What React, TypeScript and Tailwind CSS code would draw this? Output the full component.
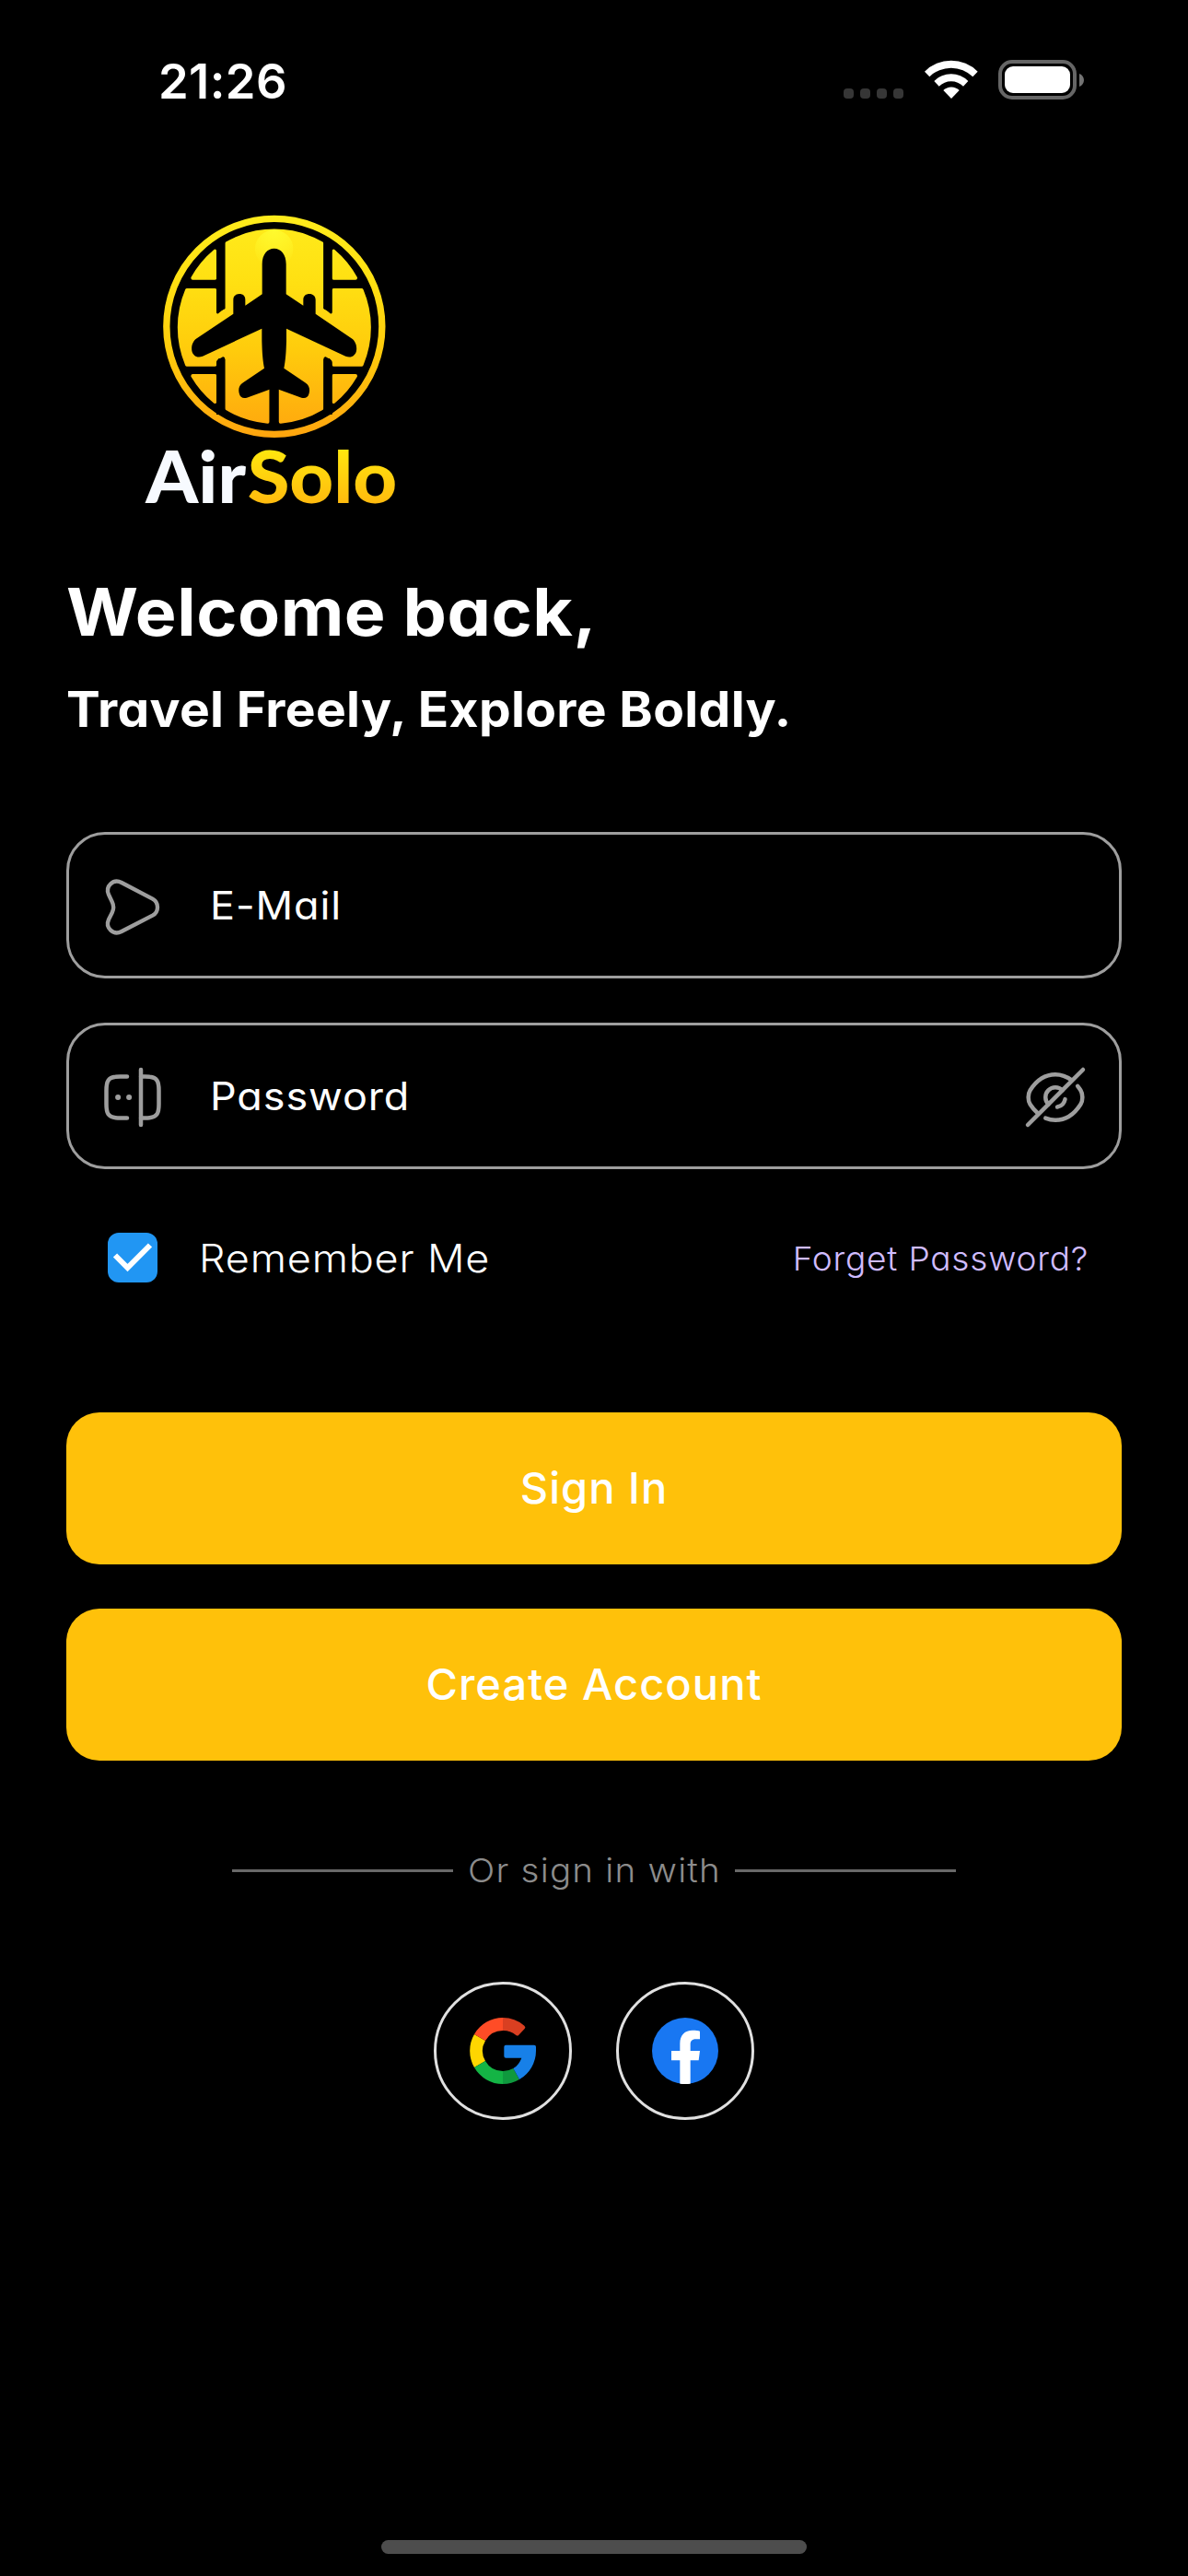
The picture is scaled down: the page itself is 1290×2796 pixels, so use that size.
import React from 'react';

function StatusBar() {
  return (
    <header className="flex h-[177px] items-start justify-between pl-[172px] pr-[113px]">
      <span className="mt-[58px] h-[60px] text-[52.5px] leading-[60px] font-semibold tracking-[0.4px]">21:26</span>
      <div className="mt-[65px] flex h-[43px] items-center">
        <div className="mt-[30px] flex gap-[7px]">
          {[0, 1, 2, 3].map((i) => (
            <i key={i} className="size-[11px] rounded-[4px] bg-[#363636]" />
          ))}
        </div>
        <svg className="ml-[22px] h-[43px] w-[60px]" viewBox="368 75 180 129" fill="#fff">
          <path d="M371 113A122 122 0 0 1 544 113L528 130A100 100 0 0 0 387 130Z" />
          <path d="M402 144A78 78 0 0 1 513 144L497 161A56 56 0 0 0 418 161Z" />
          <path d="M432 174A37 37 0 0 1 484 174L458 201Z" />
        </svg>
        <div className="ml-[21px] h-[43px] w-[85px] rounded-[15px] border-[4px] border-[#666] p-[3px]">
          <div className="h-full rounded-[9px] bg-white" />
        </div>
        <svg className="ml-[3px] h-[14px] w-[5px]" viewBox="0 0 5 14" fill="#737373">
          <path d="M0 0C3 1 5 4 5 7S3 13 0 14Z" />
        </svg>
      </div>
    </header>
  );
}

function Logo() {
  return (
    <svg className="-mb-[40px] ml-[58px] h-[380px] w-[330px]" viewBox="-30 0 990 1140">
      <defs>
        <linearGradient id="gold" gradientUnits="userSpaceOnUse" x1="0" y1="40" x2="0" y2="765">
          <stop offset="0" stopColor="#ffec1c" />
          <stop offset="0.3" stopColor="#ffe012" />
          <stop offset="0.6" stopColor="#ffcc0c" />
          <stop offset="1" stopColor="#ffa50e" />
        </linearGradient>
        <radialGradient id="glow" gradientUnits="userSpaceOnUse" cx="473" cy="95" r="120">
          <stop offset="0" stopColor="#fffa2e" />
          <stop offset="1" stopColor="#fffa2e" stopOpacity="0" />
        </radialGradient>
        <linearGradient id="word" gradientUnits="userSpaceOnUse" x1="0" y1="800" x2="0" y2="985">
          <stop offset="0" stopColor="#ffe80e" />
          <stop offset="1" stopColor="#ffb90e" />
        </linearGradient>
      </defs>
      <circle cx="473.5" cy="403" r="351" fill="none" stroke="url(#gold)" strokeWidth="22" />
      <g fill="url(#gold)" stroke="url(#gold)" strokeWidth="12" strokeLinejoin="round">
        <path d="M319 134A310 310 0 0 1 628 134V345L662 372H781V402H163V372H285L319 345Z" stroke="none" />
        <path d="M319 133A310 310 0 0 1 628 133V670A310 310 0 0 1 494 713V600H452V713A310 310 0 0 1 319 670Z" />
        <path d="M280 158V245H208A310 310 0 0 1 280 158Z" />
        <path d="M667 158V245H738A310 310 0 0 0 667 158Z" />
        <path d="M189 285H280V370L325 345V505L290 500L280 516V527H189A310 310 0 0 1 189 285Z" />
        <path d="M758 285H667V370L622 345V505L656 500L667 516V527H758A310 310 0 0 0 758 285Z" />
        <path d="M280 648V564H208A310 310 0 0 0 280 648Z" />
        <path d="M667 648V564H738A310 310 0 0 1 667 648Z" />
      </g>
      <circle cx="473" cy="150" r="62" fill="url(#glow)" />
      <g fill="#000">
        <path d="M285 120H313V345Q300 351 291 361Q285 364 285 355Z" />
        <path d="M662 120H634V345Q647 351 656 361Q662 364 662 355Z" />
        <path d="M285 690V522Q285 512 293 509L306 502Q313 501 313 510V690Z" />
        <path d="M662 690V522Q662 512 654 509L641 502Q634 501 634 510V690Z" />
        <path d="M458 600H487V735H458Z" />
        <path d="M434 298V200C434 168 451 149 473 149S512 168 512 200V298L568 335V316C568 303 577 297 588 297S608 304 608 316V362L725 442C740 452 743 470 741 482C738 497 725 507 706 500L513 410V450C512 490 510 515 505 539L574 586C588 595 590 608 587 620C584 634 574 639 562 635L488 608H458L384 635C372 639 362 634 359 620C356 608 358 595 372 586L441 539C436 515 434 490 433 450V410L240 500C221 507 208 497 205 482C203 470 206 452 221 442L340 362V316C340 304 349 297 360 297S379 303 379 316V335Z" />
      </g>
      <text x="55" y="977" fontFamily="Lato, sans-serif" fontWeight="900" fontSize="232" fill="#f7faff" textLength="326" lengthAdjust="spacingAndGlyphs">Air</text>
      <text x="386" y="977" fontFamily="Lato, sans-serif" fontWeight="900" fontSize="232" fill="url(#word)" textLength="488" lengthAdjust="spacingAndGlyphs">Solo</text>
    </svg>
  );
}

const iconProps = {
  fill: 'none',
  stroke: '#9e9e9e',
  strokeLinecap: 'round' as const,
  strokeLinejoin: 'round' as const,
};

function SendIcon() {
  return (
    <svg className="mt-[3px] size-[72px]" viewBox="144 174 216 216" {...iconProps} strokeWidth="13">
      <path d="M216 204L317 257Q333 266 333 284T317 311L216 363C189 377 162 351 174 324L185 302Q194 284 185 266L174 243C162 216 189 190 216 204Z" />
    </svg>
  );
}

function PasswordIcon() {
  return (
    <svg className="mt-[3px] size-[72px]" viewBox="0 0 24 24" {...iconProps} strokeWidth="1.5">
      <path d="M10 19.5H7.5c-.62 0-1.17-.02-1.66-.09C3.21 19.12 2.5 17.88 2.5 14.5v-5c0-3.38.71-4.62 3.34-4.91.49-.07 1.04-.09 1.66-.09H10" />
      <path d="M15.02 4.5h1.48c.62 0 1.17.02 1.66.09 2.63.29 3.34 1.53 3.34 4.91v5c0 3.38-.71 4.62-3.34 4.91-.49.07-1.04.09-1.66.09h-1.48" />
      <path d="M15 2v20" />
      <path d="M10.7 12h.01M6.7 12h.01" strokeWidth="2" />
    </svg>
  );
}

function EyeSlashIcon() {
  return (
    <svg className="mt-[3px] ml-auto size-[72px]" viewBox="0 0 24 24" {...iconProps} strokeWidth="1.5">
      <path d="M14.53 9.47l-5.06 5.06a3.576 3.576 0 1 1 5.06-5.06z" />
      <path d="M17.82 5.77C16.07 4.45 14.07 3.73 12 3.73c-3.53 0-6.82 2.08-9.11 5.68-.9 1.41-.9 3.78 0 5.19.79 1.24 1.71 2.31 2.71 3.17" />
      <path d="M8.42 19.53c1.14.48 2.35.74 3.58.74 3.53 0 6.82-2.08 9.11-5.68.9-1.41.9-3.78 0-5.19-.33-.52-.69-1.01-1.06-1.47" />
      <path d="M15.51 12.7a3.565 3.565 0 0 1-2.82 2.82M9.47 14.53L2 22M22 2l-7.47 7.47" />
    </svg>
  );
}

function Field({ icon, label, trailing }: { icon: React.ReactNode; label: string; trailing?: React.ReactNode }) {
  return (
    <label className="flex h-[159px] items-center rounded-[42px] border-[3px] border-[#9e9e9e] px-[33px]">
      {icon}
      <span className="ml-[48px] origin-left scale-x-[1.07] text-[42px] tracking-[0.85px] [font-feature-settings:'cv11']">{label}</span>
      {trailing}
    </label>
  );
}

function PrimaryButton({ children }: { children: React.ReactNode }) {
  return (
    <button className="h-[165px] w-full rounded-[36px] bg-[#ffc10a] text-[47px] font-medium tracking-[1.05px] text-white">
      {children}
    </button>
  );
}

function GoogleIcon() {
  return (
    <svg className="size-[72px]" viewBox="180 180 216 216">
      <path fill="#ffd600" d="M195 234A108 108 0 0 0 195 342L231 321A66 66 0 0 1 231 255Z" />
      <path fill="#ff4c26" d="M195 234A108 108 0 0 1 288 180V222A66 66 0 0 0 231 255Z" />
      <path fill="#d93f21" d="M288 180A108 108 0 0 1 358 206Q364 211 359 216L340 236Q336 241 331 237A66 66 0 0 0 288 222Z" />
      <path fill="#14b445" d="M195 342A108 108 0 0 0 288 396V354A66 66 0 0 1 231 321Z" />
      <path fill="#0f993e" d="M288 396A108 108 0 0 0 342 381L322 345A66 66 0 0 1 288 354Z" />
      <path fill="#1780e8" d="M342 381A108 108 0 0 0 396 288V275Q396 269 390 269H298Q292 269 292 275V305Q292 311 298 311H349Q341 334 322 345Z" />
    </svg>
  );
}

function FacebookIcon() {
  return (
    <svg className="size-[72px]" viewBox="774 180 216 216">
      <circle cx="882" cy="288" r="108" fill="#1877f2" />
      <path fill="#fff" d="M865 395V319H837V288H865V264C865 236 881 221 906 221C916 221 925 222 930 224V250H917C903 250 899 258 899 267V288H930L926 319H899V395Q882 397 865 395Z" />
    </svg>
  );
}

function SocialButton({ children }: { children: React.ReactNode }) {
  return (
    <button className="flex size-[150px] items-center justify-center rounded-full border-[3px] border-[#e0e0e0]">
      {children}
    </button>
  );
}

export default function App() {
  return (
    <div className="flex h-[2796px] w-[1290px] flex-col overflow-hidden bg-black font-['Inter',sans-serif] whitespace-nowrap text-white">
      <StatusBar />
      <main className="flex flex-col px-[72px] pt-[43px]">
        <Logo />
        <h1 className="mt-[59px] mb-px h-[90px] w-fit origin-left scale-x-[1.06] text-[71px] leading-[90px] font-bold tracking-[0.5px] [font-feature-settings:'cv11']">
          Welcome back,
        </h1>
        <h2 className="mt-[25px] h-[70px] w-fit origin-left scale-x-[1.04] text-[53px] leading-[70px] font-bold tracking-[0.32px] [font-feature-settings:'cv11']">
          Travel Freely, Explore Boldly.
        </h2>

        <div className="mt-[98px] flex flex-col gap-[48px]">
          <Field icon={<SendIcon />} label="E-Mail" />
          <Field icon={<PasswordIcon />} label="Password" trailing={<EyeSlashIcon />} />
        </div>

        <div className="mt-[69px] flex h-[54px] items-center justify-between pr-[36px] pl-[45px]">
          <label className="flex items-center gap-[45px]">
            <span className="size-[54px] rounded-[12px] bg-[#2196f3]">
              <svg className="size-[54px]" viewBox="0 0 54 54" fill="none" stroke="#fff" strokeWidth="6">
                <path d="M8 24.500L21.500 38L46 13.500" />
              </svg>
            </span>
            <span className="mt-px origin-left scale-x-[1.07] text-[42px] font-[330] tracking-[0.8px] [font-feature-settings:'cv11']">
              Remember Me
            </span>
          </label>
          <a className="mt-[2px] origin-right scale-x-[1.03] text-[36px] font-light tracking-[0.75px] text-[#d0bcff] [font-feature-settings:'cv11']">
            Forget Password?
          </a>
        </div>

        <div className="mt-[141px] flex flex-col gap-[48px]">
          <PrimaryButton>Sign In</PrimaryButton>
          <PrimaryButton>Create Account</PrimaryButton>
        </div>

        <div className="mt-[90px] flex h-[60px] items-center px-[180px]">
          <i className="-mt-px h-[3px] w-[240px] bg-[#696969]" />
          <span className="-mt-[2px] ml-[16px] origin-left scale-x-[1.07] text-[36px] leading-[60px] font-light tracking-[1.15px] text-[#8c8c8c] [font-feature-settings:'cv11']">
            Or sign in with
          </span>
          <i className="-mt-px ml-auto h-[3px] w-[240px] bg-[#696969]" />
        </div>

        <div className="mt-[90px] flex justify-center gap-[48px]">
          <SocialButton>
            <GoogleIcon />
          </SocialButton>
          <SocialButton>
            <FacebookIcon />
          </SocialButton>
        </div>
      </main>
      <div className="mx-auto mt-auto mb-[24px] h-[15px] w-[462px] rounded-full bg-[#4d4d4d]" />
    </div>
  );
}
